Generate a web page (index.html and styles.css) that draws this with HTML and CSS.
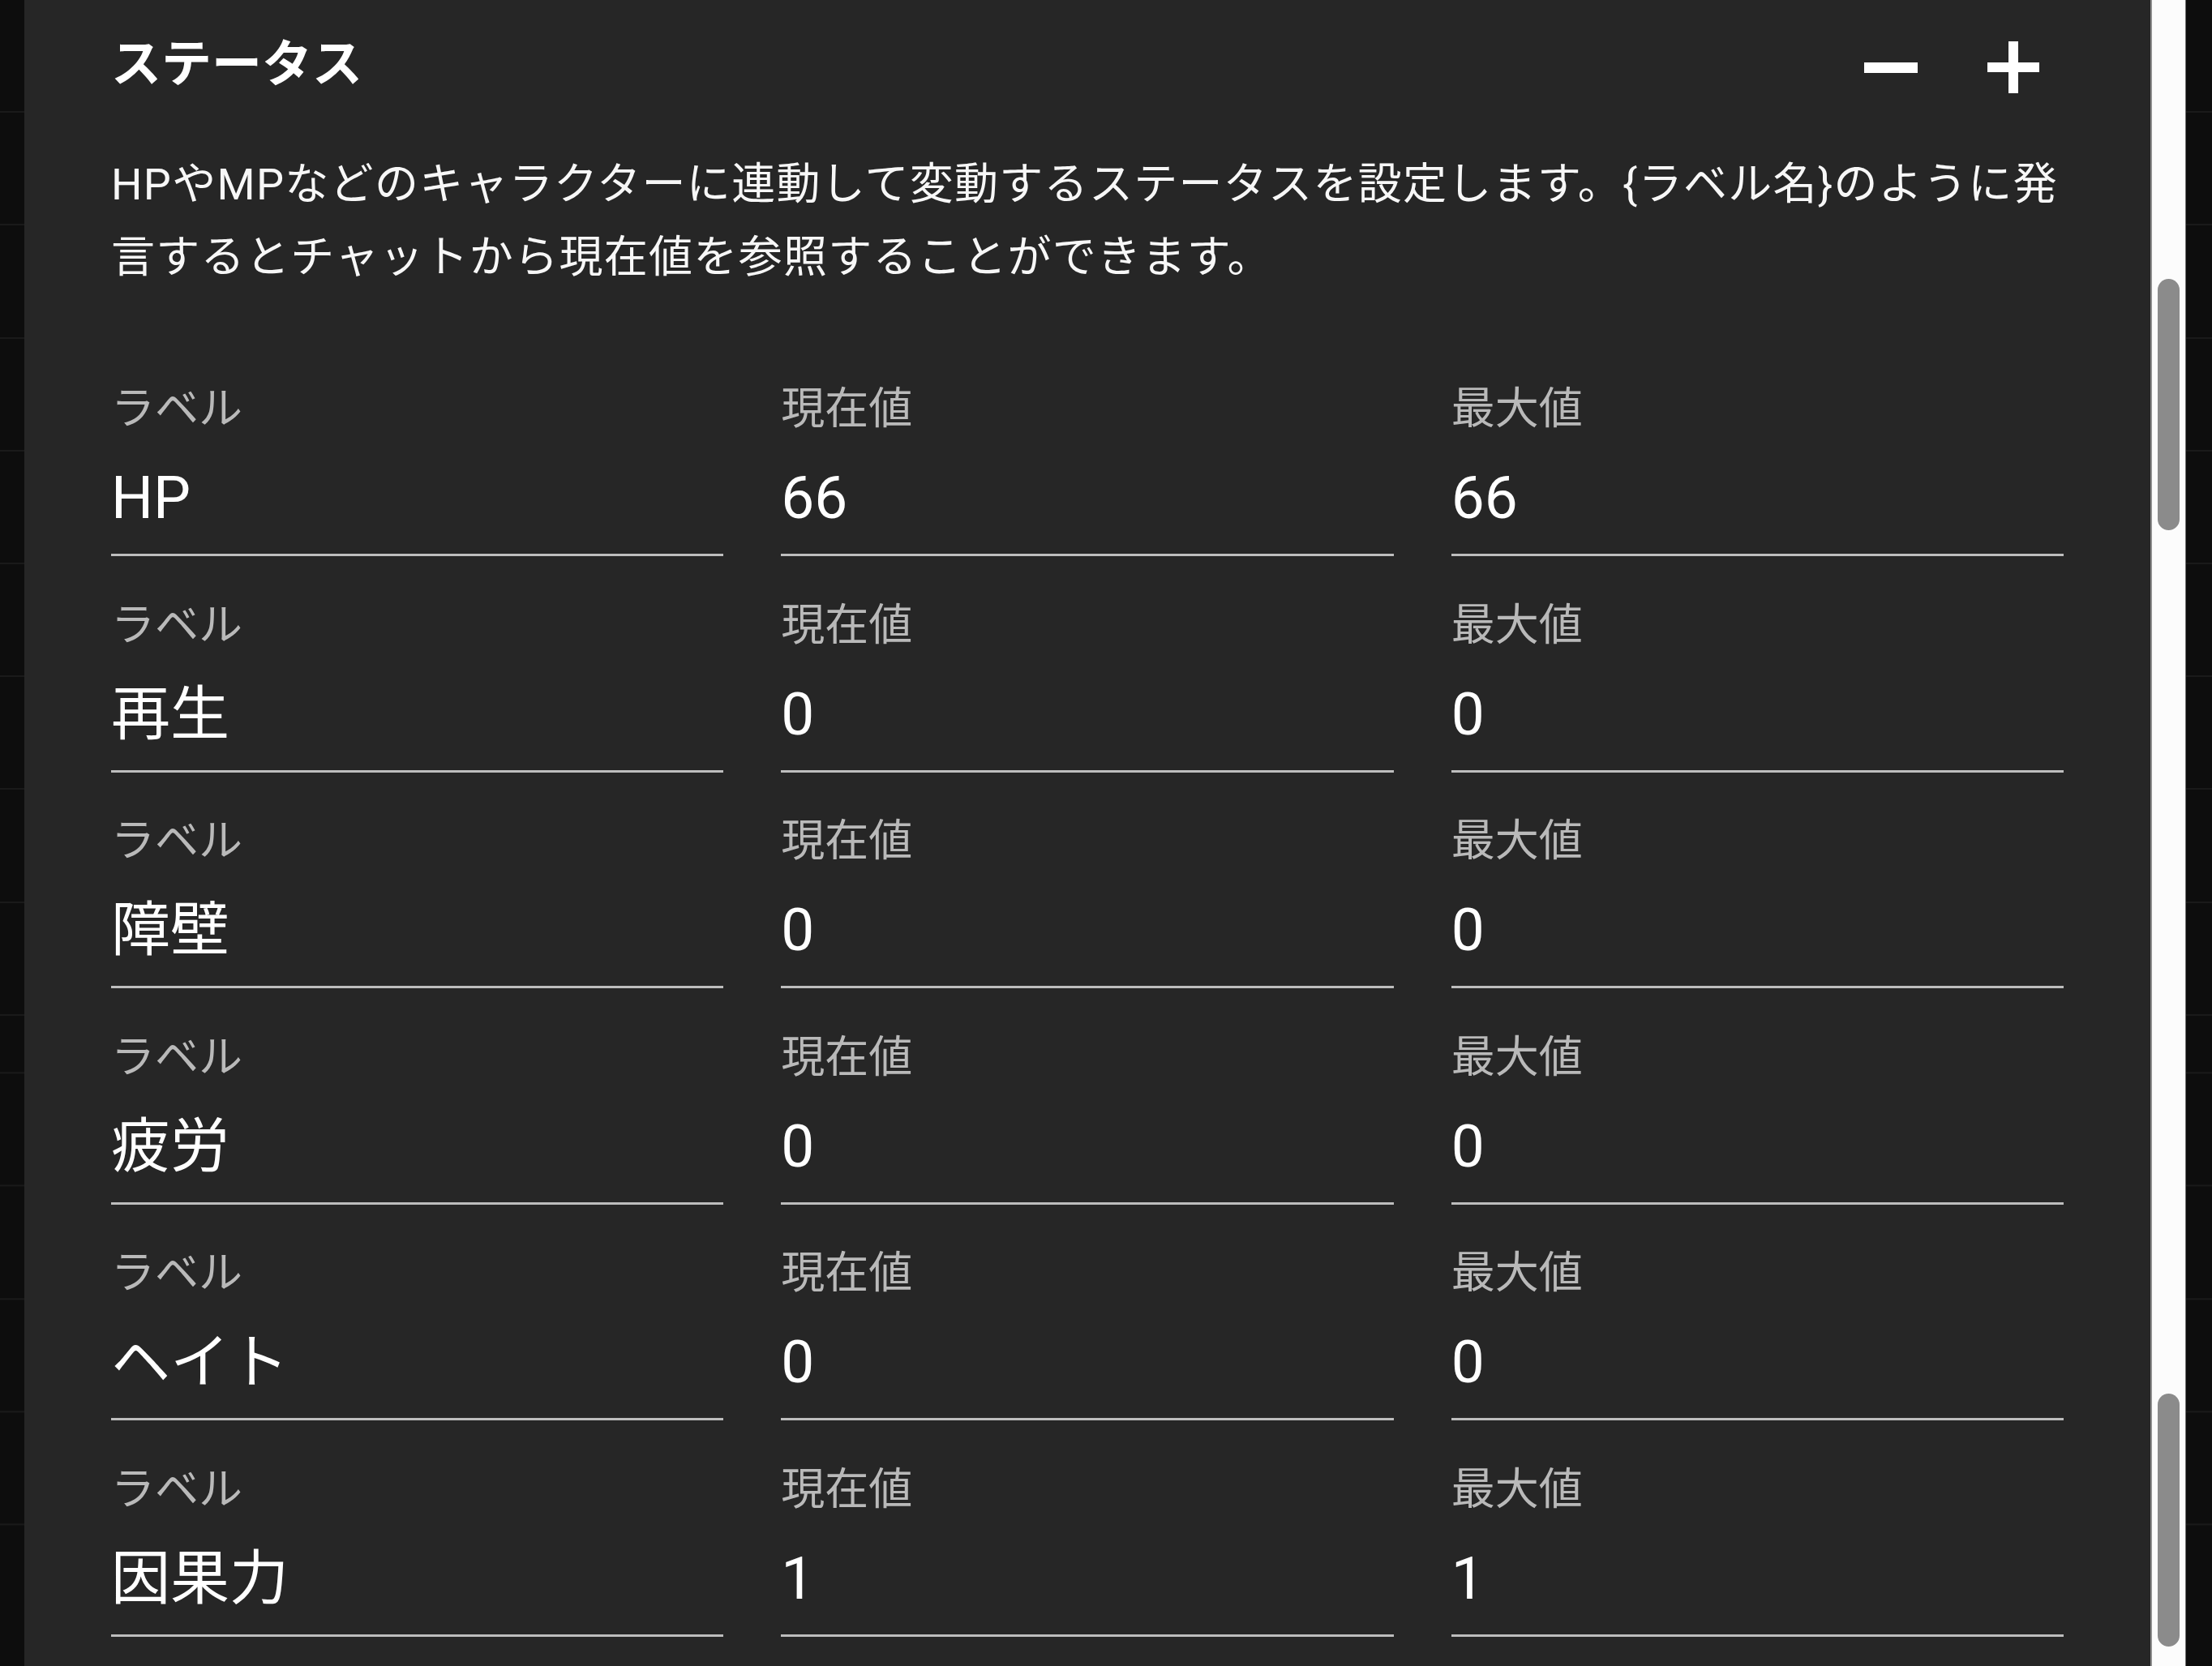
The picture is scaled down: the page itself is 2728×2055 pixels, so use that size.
FILE: index.html
```html
<!DOCTYPE html>
<html lang="ja">
<head>
<meta charset="utf-8">
<title>ステータス</title>
<link rel="stylesheet" href="styles.css">
</head>
<body>
<div class="app">
  <div class="side side-left">
    <div class="stripe stripe-top"></div>
    <div class="stripe stripe-bottom"></div>
  </div>

  <main class="panel">
    <header class="panel-head">
      <h2 class="title">ステータス</h2>
      <div class="actions">
        <button class="icon-btn" aria-label="削除">
          <svg class="icon icon-minus" viewBox="0 0 66 13" width="66" height="13"><rect x="0" y="0" width="66" height="13" fill="currentColor"/></svg>
        </button>
        <button class="icon-btn" aria-label="追加">
          <svg class="icon" viewBox="0 0 64 64" width="64" height="64"><rect x="0" y="26" width="64" height="12" fill="currentColor"/><rect x="26" y="0" width="12" height="64" fill="currentColor"/></svg>
        </button>
      </div>
    </header>

    <p class="desc">HPやMPなどのキャラクターに連動して変動するステータスを設定します。{ラベル名}のように発言するとチャットから現在値を参照することができます。</p>

    <div class="grid">
      <div class="field"><span class="field-label">ラベル</span><span class="field-value">HP</span></div>
      <div class="field"><span class="field-label">現在値</span><span class="field-value">66</span></div>
      <div class="field"><span class="field-label">最大値</span><span class="field-value">66</span></div>

      <div class="field"><span class="field-label">ラベル</span><span class="field-value">再生</span></div>
      <div class="field"><span class="field-label">現在値</span><span class="field-value">0</span></div>
      <div class="field"><span class="field-label">最大値</span><span class="field-value">0</span></div>

      <div class="field"><span class="field-label">ラベル</span><span class="field-value">障壁</span></div>
      <div class="field"><span class="field-label">現在値</span><span class="field-value">0</span></div>
      <div class="field"><span class="field-label">最大値</span><span class="field-value">0</span></div>

      <div class="field"><span class="field-label">ラベル</span><span class="field-value">疲労</span></div>
      <div class="field"><span class="field-label">現在値</span><span class="field-value">0</span></div>
      <div class="field"><span class="field-label">最大値</span><span class="field-value">0</span></div>

      <div class="field"><span class="field-label">ラベル</span><span class="field-value">ヘイト</span></div>
      <div class="field"><span class="field-label">現在値</span><span class="field-value">0</span></div>
      <div class="field"><span class="field-label">最大値</span><span class="field-value">0</span></div>

      <div class="field"><span class="field-label">ラベル</span><span class="field-value">因果力</span></div>
      <div class="field"><span class="field-label">現在値</span><span class="field-value">1</span></div>
      <div class="field"><span class="field-label">最大値</span><span class="field-value">1</span></div>
    </div>
  </main>

  <div class="scrollbar">
    <div class="track track-top"><div class="thumb thumb-top"></div></div>
    <div class="track track-bottom"><div class="thumb thumb-bottom"></div></div>
  </div>

  <div class="side side-right">
    <div class="stripe stripe-top"></div>
    <div class="stripe stripe-bottom"></div>
  </div>
</div>
</body>
</html>
```

FILE: styles.css
```css
* {
  box-sizing: border-box;
}

html, body {
  margin: 0;
  padding: 0;
  background: #0e0e0e;
}

body {
  font-family: Roboto, "Noto Sans CJK JP", sans-serif;
  color: #ffffff;
}

.app {
  display: flex;
  width: 2728px;
  height: 2055px;
  overflow: hidden;
}

/* dark side strips with faint row lines */
.side {
  display: flex;
  flex-direction: column;
  background: #0d0d0d;
}

.side-left {
  width: 30px;
}

.side-right {
  width: 32px;
}

.stripe {
  background-image: repeating-linear-gradient(
    180deg,
    transparent 0,
    transparent 137.2px,
    #1a1a1a 137.2px,
    #1a1a1a 139.2px
  );
}

.stripe-top {
  height: 1308px;
}

.stripe-bottom {
  flex: 1;
  background-position: 0 -122.6px;
}

/* main panel */
.panel {
  flex: 1;
  background: #262626;
  padding: 0 107px;
  overflow: hidden;
}

.panel-head {
  display: flex;
  align-items: center;
  justify-content: space-between;
  height: 156px;
  padding-top: 4px;
}

.title {
  margin: 0;
  font-size: 62px;
  font-weight: 700;
  line-height: 1;
  color: #ffffff;
}

.actions {
  display: flex;
  align-items: center;
  gap: 86px;
  margin-right: 30px;
  margin-top: 6px;
}

.icon-btn {
  display: flex;
  align-items: center;
  justify-content: center;
  padding: 0;
  border: 0;
  background: none;
  color: #ffffff;
  height: 64px;
}

.icon {
  display: block;
}

.desc {
  margin: 27px 0 0;
  font-size: 54px;
  line-height: 90px;
  letter-spacing: 1.3px;
  color: #f7f7f7;
}

/* status grid */
.grid {
  display: grid;
  grid-template-columns: repeat(3, 1fr);
  column-gap: 71px;
  row-gap: 50.6px;
  margin-top: 107px;
}

.field {
  display: flex;
  flex-direction: column;
  padding-bottom: 19px;
  border-bottom: 3px solid #bdbdbd;
}

.field-label {
  font-size: 54px;
  line-height: 70px;
  color: #b9b9b9;
}

.field-value {
  margin-top: 24px;
  font-size: 73px;
  line-height: 100px;
  color: #ffffff;
}

/* scrollbar (captured as two stitched segments) */
.scrollbar {
  width: 44px;
  display: flex;
  flex-direction: column;
}

.track {
  background: #fcfcfc;
  border-left: 2px solid #8e8e8e;
  border-right: 1px solid #6e6e6e;
  padding-left: 7px;
}

.track-top {
  height: 1308px;
}

.track-bottom {
  flex: 1;
}

.thumb {
  width: 27px;
  border-radius: 14px;
  background: #8b8b8b;
}

.thumb-top {
  margin-top: 344px;
  height: 310px;
}

.thumb-bottom {
  margin-top: 411px;
  height: 312px;
}
```
